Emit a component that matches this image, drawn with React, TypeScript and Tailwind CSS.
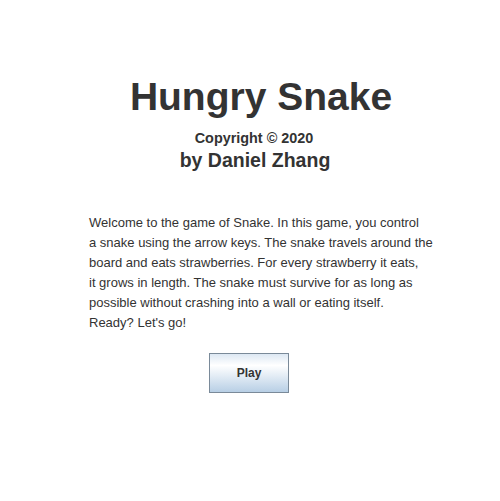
export default function App() {
  return (
    <div className="w-[500px] h-[501px] bg-white text-[#333333] font-['Liberation_Sans',Arial,sans-serif] flex flex-col items-center">
      <h1 className="mt-[74px] ml-[22px] text-[39px] leading-[46px] font-bold">Hungry Snake</h1>
      <p className="mt-[9px] ml-[8px] text-[14.4px] leading-[18px] font-bold">Copyright © 2020</p>
      <p className="mt-[1px] ml-[10px] text-[19.5px] leading-[24px] font-bold">by Daniel Zhang</p>
      <div className="mt-[41px] self-start ml-[89px] text-[13px] leading-[20px] whitespace-nowrap">
        Welcome to the game of Snake. In this game, you control<br />
        a snake using the arrow keys. The snake travels around the<br />
        board and eats strawberries. For every strawberry it eats,<br />
        it grows in length. The snake must survive for as long as<br />
        possible without crashing into a wall or eating itself.<br />
        Ready? Let's go!
      </div>
      <button className="mt-[20px] ml-[-2px] w-[80px] h-[40px] border border-[#7a8a99] bg-gradient-to-b from-[#dde8f3] via-white via-30% to-[#b8cfe5] text-[12px] font-bold text-[#333333]">
        Play
      </button>
    </div>
  )
}
